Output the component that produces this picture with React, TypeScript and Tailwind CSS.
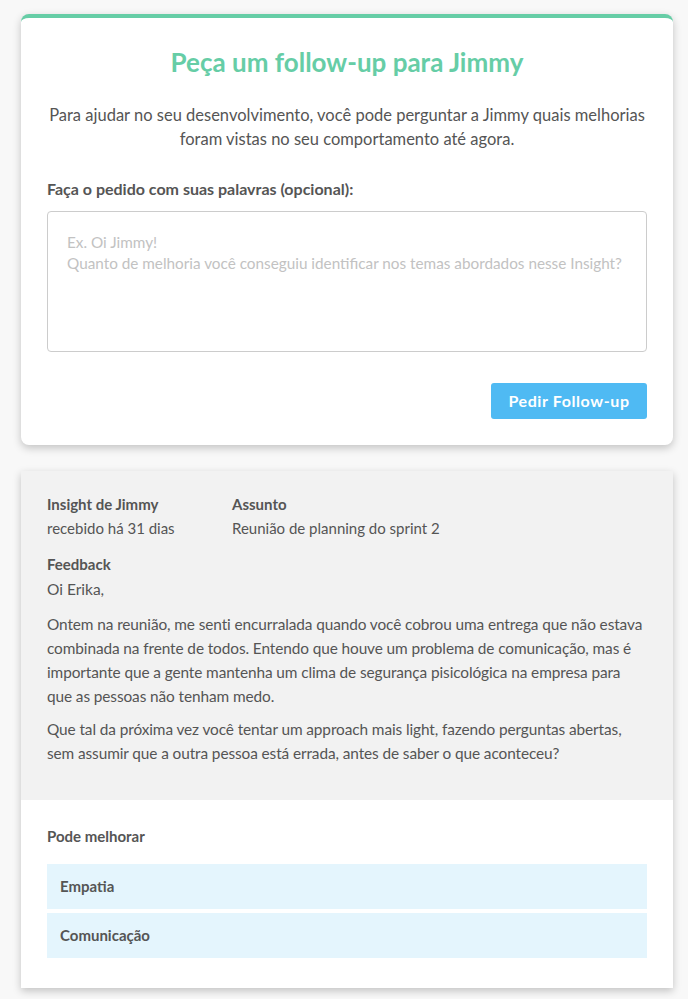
import React from 'react';

const font = { fontFamily: 'Lato, "Open Sans", sans-serif' };

const areas = ['Empatia', 'Comunicação'];

const App: React.FC = () => {
    return (
        <div className="min-h-screen bg-[#f8f8f8] pl-[21px] pr-[15px] pt-[14px] pb-[11px] text-[#555555]" style={font}>
            {/* pedido de follow-up */}
            <div className="bg-white rounded-lg border-t-4 border-[#66cda6] shadow-[0_3px_8px_rgba(0,0,0,0.22)] px-[26px] pt-[26px] pb-[26px]">
                <h1 className="text-center text-[26px] font-bold text-[#66cda6] leading-[36px]">
                    Peça um follow-up para Jimmy
                </h1>
                <p className="text-center text-[16.5px] leading-[24px] mt-[23px]">
                    Para ajudar no seu desenvolvimento, você pode perguntar a Jimmy quais melhorias foram vistas no seu comportamento até agora.
                </p>
                <p className="text-[16px] font-bold leading-[24px] mt-[26px]">
                    Faça o pedido com suas palavras (opcional):
                </p>
                <textarea
                    className="block w-full h-[141px] mt-[10px] border border-[#cccccc] rounded-[4px] px-[19px] pt-[20px] text-[15.3px] leading-[21px] resize-none outline-none placeholder:text-[#c2c2c2]"
                    style={font}
                    placeholder={'Ex. Oi Jimmy!\nQuanto de melhoria você conseguiu identificar nos temas abordados nesse Insight?'}
                />
                <div className="flex justify-end mt-[31px]">
                    <button className="h-9 w-[156px] rounded-[3px] bg-[#4fbaf3] text-white text-[16px] font-bold tracking-[0.6px]">
                        Pedir Follow-up
                    </button>
                </div>
            </div>

            {/* insight recebido */}
            <div className="mt-[26px] bg-white shadow-[0_3px_8px_rgba(0,0,0,0.22)]">
                <div className="bg-[#f2f2f2] px-[26px] pt-[21px] pb-[35px]">
                    <div className="flex">
                        <div className="w-[185px]">
                            <p className="text-[15px] font-bold leading-[24px]">Insight de Jimmy</p>
                            <p className="text-[15px] leading-[24px]">recebido há 31 dias</p>
                        </div>
                        <div>
                            <p className="text-[15px] font-bold leading-[24px]">Assunto</p>
                            <p className="text-[15px] leading-[24px]">Reunião de planning do sprint 2</p>
                        </div>
                    </div>
                    <p className="text-[15px] font-bold leading-[24px] mt-[12px]">Feedback</p>
                    <p className="text-[15.5px] leading-[24px] mt-[1px]">Oi Erika,</p>
                    <p className="text-[15.4px] tracking-[-0.1px] leading-[24px] mt-[11px] whitespace-nowrap">
                        Ontem na reunião, me senti encurralada quando você cobrou uma entrega que não estava<br />
                        combinada na frente de todos. Entendo que houve um problema de comunicação, mas é<br />
                        importante que a gente mantenha um clima de segurança pisicológica na empresa para<br />
                        que as pessoas não tenham medo.
                    </p>
                    <p className="text-[15.4px] tracking-[-0.1px] leading-[24px] mt-[9px] whitespace-nowrap">
                        Que tal da próxima vez você tentar um approach mais light, fazendo perguntas abertas,<br />
                        sem assumir que a outra pessoa está errada, antes de saber o que aconteceu?
                    </p>
                </div>
                <div className="px-[26px] pt-[25px] pb-[30px]">
                    <p className="text-[15px] font-bold leading-[22px]">Pode melhorar</p>
                    <div className="flex flex-col gap-1 mt-[17px]">
                        {areas.map((area) => (
                            <div key={area} className="h-[45px] flex items-center bg-[#e4f5fd] px-[13px] text-[15px] font-bold">
                                {area}
                            </div>
                        ))}
                    </div>
                </div>
            </div>
        </div>
    );
};

export default App;
